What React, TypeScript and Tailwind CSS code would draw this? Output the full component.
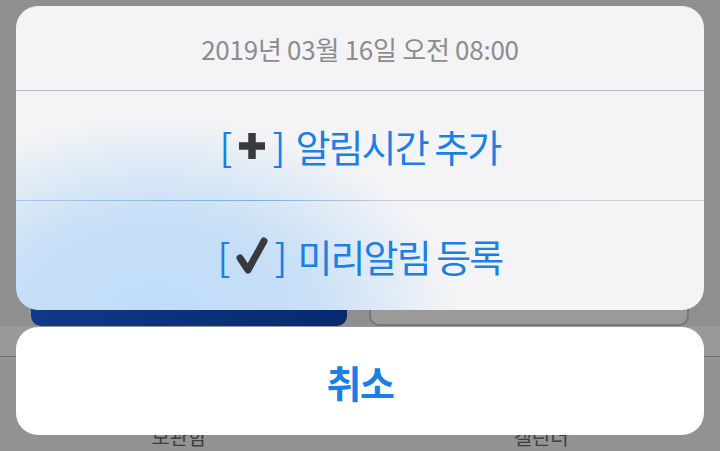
import { ReactNode } from 'react';

const PlusMark = () => (
    <svg width="30" height="30" viewBox="0 0 30 30" className="shrink-0">
        <path d="M15 2v26M2 15h26" stroke="#3a3a3c" strokeWidth="7.5" strokeLinecap="butt" />
    </svg>
);

const CheckMark = () => (
    <svg width="34" height="38" viewBox="0 0 34 38" className="shrink-0">
        <path d="M5 21 L13 33 L29 4" fill="none" stroke="#3a3a3c" strokeWidth="7" strokeLinecap="round" strokeLinejoin="round" />
    </svg>
);

const ActionRow = ({ icon, label }: { icon: ReactNode; label: string }) => (
    <div className="flex-1 flex items-center justify-center text-[#1c7fe6] text-[38px] leading-none tracking-[-0.05em]">
        <span>[</span>
        <span className="mx-[6px] flex items-center">{icon}</span>
        <span>]</span>
        <span className="ml-[12px]">{label}</span>
    </div>
);

export default function App() {
    return (
        <div
            className="relative w-[720px] h-[451px] overflow-hidden bg-[#8f8f8f]"
            style={{ fontFamily: '"Noto Sans CJK KR", "Noto Sans", sans-serif' }}
        >
            {/* dimmed page behind the action sheet */}
            <div className="flex flex-col h-full">
                <div className="h-[276px]" />
                <div className="flex gap-[22px] px-[31px] h-[50px]">
                    <div className="flex-1 rounded-b-[10px] bg-[linear-gradient(to_right,#0e3a86,#052a6e)]" />
                    <div className="flex-1 rounded-b-[10px] border-2 border-[#777] bg-[#9a9a9a]" />
                </div>
                <div className="h-[30px] bg-[#999]" />
                <div className="h-px bg-[#6e6e6e]" />
                <div className="flex-1 bg-[#939393] flex items-end pb-[4px]">
                    <div className="flex-1 flex justify-center text-[20px] text-[#3d3d3d] leading-none pr-[4px]">보관함</div>
                    <div className="flex-1 flex justify-center text-[20px] text-[#3d3d3d] leading-none">캘린더</div>
                </div>
            </div>

            {/* action sheet */}
            <div className="absolute inset-0 flex flex-col px-4 pt-[6px] gap-[17px]">
                <div className="h-[304px] rounded-[22px] overflow-hidden flex flex-col bg-[#f4f4f6] bg-[radial-gradient(ellipse_300px_200px_at_140px_310px,rgba(192,220,247,1),rgba(194,221,247,0.9)_50%,rgba(244,244,246,0)_100%)]">
                    <div className="h-[84px] flex items-center justify-center text-[26px] text-[#8c8c90] tracking-[-0.01em]">
                        2019년 03월 16일 오전 08:00
                    </div>
                    <div className="h-px bg-[#b8bbc1]" />
                    <ActionRow icon={<PlusMark />} label="알림시간 추가" />
                    <div className="h-px bg-[linear-gradient(to_right,#a9c8e8,#7db1e2_35%,#c7cbd2_55%,#d0d2d7)]" />
                    <ActionRow icon={<CheckMark />} label="미리알림 등록" />
                </div>
                <div className="h-[108px] rounded-[22px] bg-white flex items-center justify-center text-[38px] font-bold text-[#1c7fe6] tracking-[-0.04em]">
                    취소
                </div>
            </div>
        </div>
    );
}
